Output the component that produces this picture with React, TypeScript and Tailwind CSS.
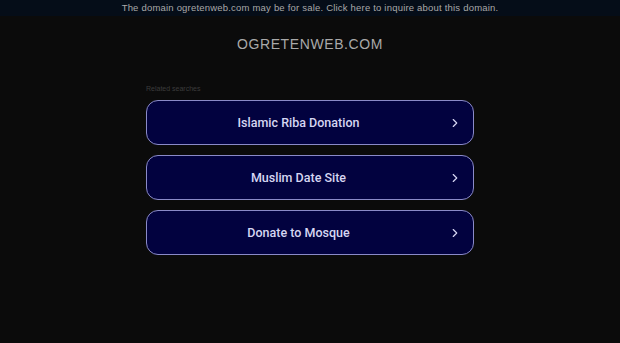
import { ChevronRight } from 'lucide-react';

const SEARCHES = ['Islamic Riba Donation', 'Muslim Date Site', 'Donate to Mosque'];

export default function App() {
  return (
    <div
      className="min-h-[343px] bg-[#0b0b0b] flex flex-col items-center"
      style={{ fontFamily: '"Liberation Sans", Arial, sans-serif' }}
    >
      {/* Banner */}
      <div className="w-full h-[16px] bg-[#050d18] flex items-center justify-center">
        <span className="text-[9.5px] leading-none text-[#a8a8a8] tracking-[0.2px]">
          The domain ogretenweb.com may be for sale. Click here to inquire about this domain.
        </span>
      </div>

      <h1 className="mt-[21px] text-[14px] leading-none text-[#a9a9a9] tracking-[0.6px]">OGRETENWEB.COM</h1>

      <div className="mt-[34px] w-[328px] flex flex-col">
        <p className="text-[7px] leading-none text-[#3c3c3c] mb-[8px]">Related searches</p>
        <div className="flex flex-col gap-[10px]">
          {SEARCHES.map(s => (
            <div
              key={s}
              className="h-[45px] rounded-[12px] border border-[#8a8ac8] bg-[#02023f] flex items-center pl-[2px] pr-[11px]"
            >
              <span
                className="flex-1 pt-[1px] text-center text-[12.5px] font-medium text-[#d6d6f2]"
                style={{ fontFamily: 'Roboto, Arial, sans-serif' }}
              >
                {s}
              </span>
              <ChevronRight size={14} strokeWidth={2} className="text-[#d6d6f2]" />
            </div>
          ))}
        </div>
      </div>
    </div>
  );
}
